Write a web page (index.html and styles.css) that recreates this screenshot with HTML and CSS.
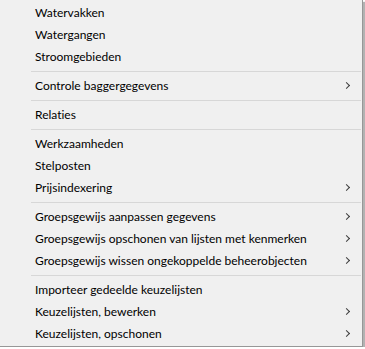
FILE: index.html
```html
<!DOCTYPE html>
<html lang="nl">
<head>
    <meta charset="utf-8">
    <link rel="stylesheet" href="styles.css">
</head>
<body>
<!-- contextmenu met submenu-pijltjes -->
<div class="menu">
    <ul class="group">
        <li>Watervakken</li>
        <li>Watergangen</li>
        <li>Stroomgebieden</li>
    </ul>
    <ul class="group">
        <li class="sub">Controle baggergegevens</li>
    </ul>
    <ul class="group">
        <li>Relaties</li>
    </ul>
    <ul class="group">
        <li>Werkzaamheden</li>
        <li>Stelposten</li>
        <li class="sub">Prijsindexering</li>
    </ul>
    <ul class="group">
        <li class="sub">Groepsgewijs aanpassen gegevens</li>
        <li class="sub">Groepsgewijs opschonen van lijsten met kenmerken</li>
        <li class="sub">Groepsgewijs wissen ongekoppelde beheerobjecten</li>
    </ul>
    <ul class="group">
        <li>Importeer gedeelde keuzelijsten</li>
        <li class="sub">Keuzelijsten, bewerken</li>
        <li class="sub">Keuzelijsten, opschonen</li>
    </ul>
</div>
</body>
</html>
```

FILE: styles.css
```css
*{margin: 0; padding: 0; list-style: none; box-sizing: border-box;}
body{background: #fff; font-family: "Segoe UI", Lato, "Noto Sans", sans-serif; font-size: 12px; color: #000; font-variant-ligatures: none;}
/* menu kader met schaduw rechts en onder */
.menu{width: 363px; height: 347px; padding-top: 2px; background: #f0f0f0; border-right: 1px solid #979797; border-bottom: 1px solid #979797; box-shadow: 2px 2px 1px rgba(0,0,0,.3);}
.group + .group{border-top: 1px solid #d7d7d7; margin: 3px 1px 0 31px; padding-top: 3px;}
.group + .group li{margin-left: -31px; margin-right: -1px;}
.menu li{height: 22px; line-height: 22px; padding-left: 35px; position: relative; white-space: nowrap;}
/* pijltje voor submenu */
.menu li.sub::after{content: ""; position: absolute; right: 13px; top: 8px; width: 4px; height: 4px; border-top: 1px solid #3c3c3c; border-right: 1px solid #3c3c3c; transform: rotate(45deg);}
```
